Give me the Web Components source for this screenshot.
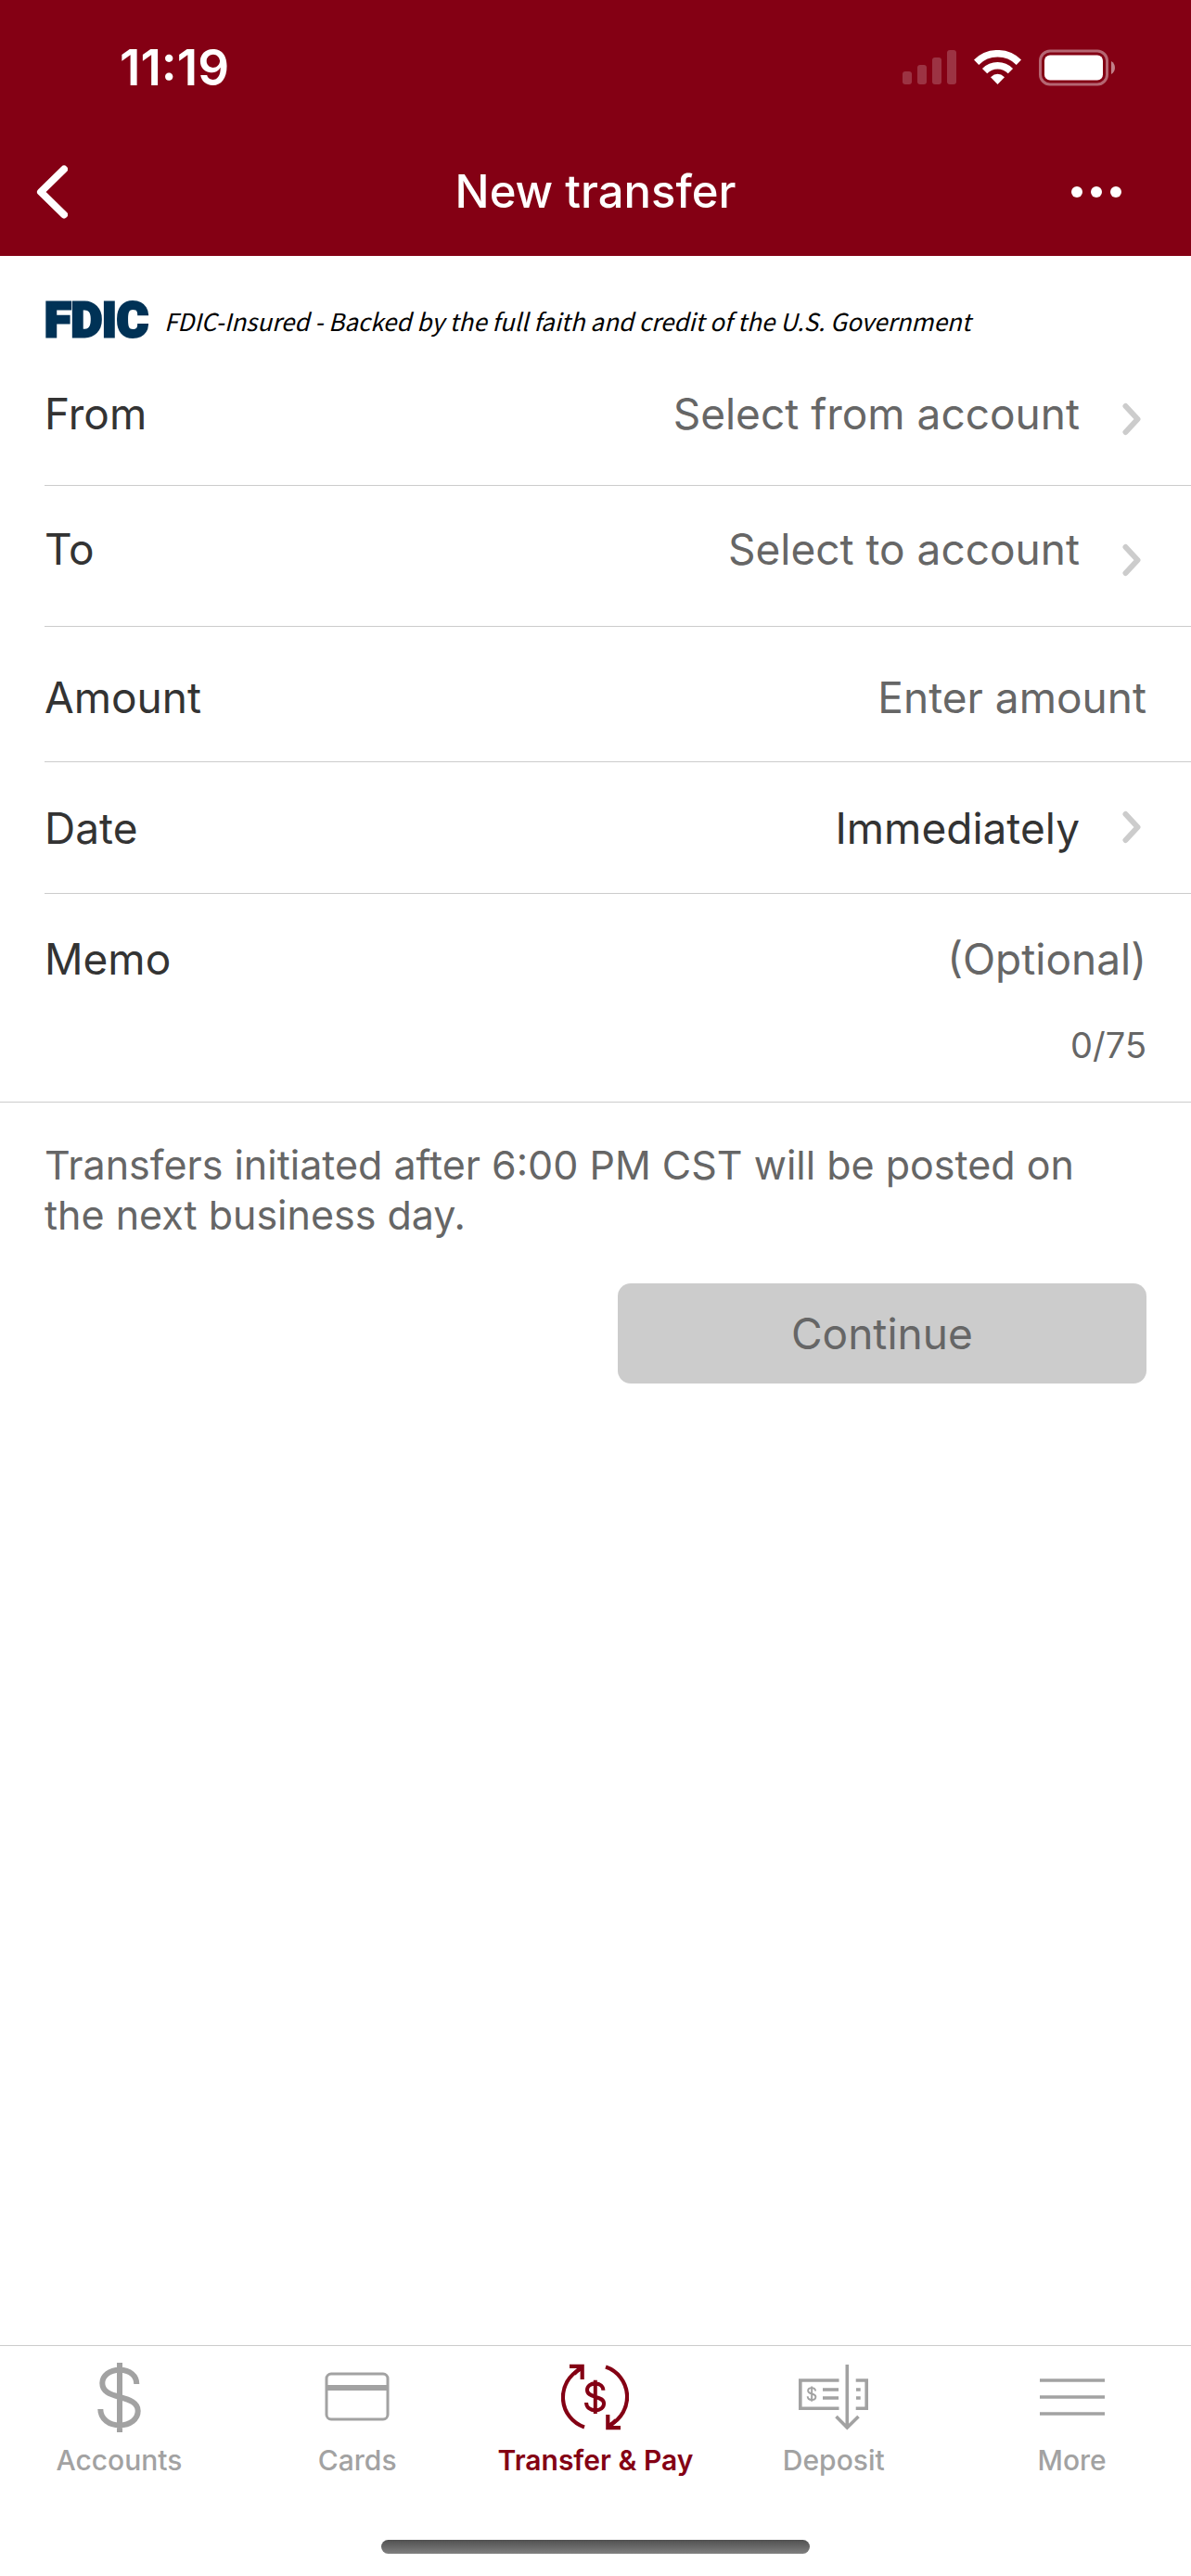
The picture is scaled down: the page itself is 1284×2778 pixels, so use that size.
<!DOCTYPE html>
<html lang="en">
<head>
<meta charset="utf-8">
<meta name="viewport" content="width=device-width">
<title>New transfer</title>
<style>
  body { margin: 0; background: #fff; color: #333; font-family: Inter, "Liberation Sans", sans-serif; }
</style>
</head>
<body>
<transfer-app></transfer-app>
<script>
const define = (name, html, setup) => customElements.define(name, class extends HTMLElement {
  constructor() {
    super();
    this.attachShadow({ mode: 'open' }).innerHTML = html;
  }
  connectedCallback() { if (setup) setup(this, this.shadowRoot); }
});

/* Clock, signal, wi-fi and battery */
define('status-bar', `
<style>
  :host { display: flex; align-items: center; justify-content: space-between; height: 146px; padding: 0 82px 0 129px; color: #fff; }
  time { font-size: 53px; font-weight: 600; line-height: 60px; }
  .icons { display: flex; align-items: center; gap: 19px; }
  svg { display: block; }
</style>
<time>11:19</time>
<div class="icons">
  <svg width="58" height="38" viewBox="0 0 58 38" fill="#fff" fill-opacity=".2" aria-label="No signal">
    <rect y="23" width="10" height="14" rx="3"/><rect x="16" y="16" width="10" height="21" rx="3"/>
    <rect x="32" y="8" width="10" height="29" rx="3"/><rect x="48" width="10" height="37" rx="3"/>
  </svg>
  <svg width="51" height="38" viewBox="0 0 51 38" fill="none" stroke="#fff" aria-label="Wi-Fi">
    <path d="M2.6 13.2A32.5 32.5 0 0 1 48.4 13.2" stroke-width="7.6"/>
    <path d="M11.6 22.6A19.5 19.5 0 0 1 39.4 22.6" stroke-width="7.4"/>
    <path d="M25.5 37L18 29.2Q25.5 22.4 33 29.2Z" fill="#fff" stroke="none"/>
  </svg>
  <svg width="82" height="40" viewBox="0 0 82 40" aria-label="Battery">
    <rect x="1.5" y="2" width="72" height="36" rx="10.5" fill="none" stroke="#fff" stroke-opacity=".4" stroke-width="3"/>
    <rect x="6" y="6.500" width="63" height="27" rx="6" fill="#fff"/>
    <path d="M78 13C83.300 15.500 83.300 24.500 78 27Z" fill="#fff" fill-opacity=".5"/>
  </svg>
</div>`);

define('nav-bar', `
<style>
  :host { display: grid; grid-template-columns: 150px 1fr 150px; align-items: center; height: 122px; padding-bottom: 8px; color: #fff; }
  h1 { margin: 0; text-align: center; font-size: 49px; font-weight: 500; line-height: 60px; }
  button { border: 0; padding: 0; background: none; color: inherit; height: 100px; display: flex; align-items: center; }
  .back { padding-left: 39px; }
  .menu { justify-content: flex-end; padding-right: 75px; }
</style>
<button class="back" aria-label="Back"><svg width="34" height="58" viewBox="0 0 34 58" fill="none" stroke="#fff" stroke-width="8" stroke-linecap="round" stroke-linejoin="round"><path d="M30 4.500L5 29L30 53.500"/></svg></button>
<h1><slot></slot></h1>
<button class="menu" aria-label="More options"><svg width="54" height="12" viewBox="0 0 54 12" fill="#fff"><circle cx="6" cy="6" r="6"/><circle cx="27" cy="6" r="6"/><circle cx="48" cy="6" r="6"/></svg></button>`);

define('fdic-banner', `
<style>
  :host { display: flex; align-items: center; gap: 17px; padding: 48px 48px 12px; line-height: 44px; }
  strong { font-family: Roboto, "Liberation Sans", sans-serif; font-size: 52px; font-weight: 900; color: #003256; -webkit-text-stroke: 3px #003256; }
  em { font-family: "Noto Sans CJK SC", sans-serif; font-size: 26px; color: #000; white-space: nowrap; }
</style>
<strong>FDIC</strong>
<em><slot></slot></em>`);

const rowStyle = `
  :host { display: block; padding-left: 48px; }
  .row { display: flex; align-items: flex-start; border-bottom: 1px solid #ccc; padding-top: var(--row-top, 43px); padding-bottom: var(--row-bottom, 42px); }
  label, .value, input { font-size: 46px; line-height: 56px; }
  label { flex: none; color: #333; }`;

/* Row which opens a picker */
define('picker-row', `
<style>${rowStyle}
  .row { padding-bottom: 0; }
  button { flex: 1; display: flex; justify-content: flex-end; align-items: flex-end; gap: 46px; border: 0; padding: 0 54px 0 0; background: none; font-family: inherit; text-align: right; }
  .value { color: var(--value-color, #666); padding-bottom: var(--row-bottom, 42px); }
  svg { display: block; flex: none; margin-bottom: 53px; }
</style>
<div class="row">
  <label for="field"></label>
  <button id="field" type="button"><span class="value"><slot></slot></span><svg width="20" height="36" viewBox="0 0 20 36" fill="none" stroke="#ccc" stroke-width="6" stroke-linecap="round" stroke-linejoin="round"><path d="M3.500 4L16.500 18L3.500 32"/></svg></button>
</div>`, (el, root) => { root.querySelector('label').textContent = el.getAttribute('label'); });

/* Row with a text box */
define('input-row', `
<style>${rowStyle}
  :host([wide]) { padding-left: 0; }
  :host([wide]) .row { padding-left: 48px; }
  .row { padding-right: 48px; }
  .entry { flex: 1; min-width: 0; display: flex; flex-direction: column; gap: 41px; }
  input { box-sizing: border-box; width: 100%; height: 56px; border: 0; padding: 0; outline: 0; background: none; font-family: inherit; color: #333; text-align: right; }
  input::placeholder { color: #666; opacity: 1; }
  ::slotted(*) { font-size: 38px; line-height: 48px; text-align: right; color: #666; }
</style>
<div class="row">
  <label for="field"></label>
  <div class="entry"><input id="field" type="text"><slot></slot></div>
</div>`, (el, root) => {
  root.querySelector('label').textContent = el.getAttribute('label');
  root.querySelector('input').placeholder = el.getAttribute('placeholder');
});

define('tab-item', `
<style>
  :host { display: block; flex: 1; min-width: 0; }
  a { display: flex; flex-direction: column; align-items: center; gap: 10px; color: #a2a2a2; text-decoration: none; font-size: 30px; font-weight: 500; line-height: 36px; white-space: nowrap; }
  :host([active]) a { color: #840014; font-weight: 600; }
  .icon { height: 80px; display: flex; align-items: center; justify-content: center; }
</style>
<a href="#"><span class="icon"><slot name="icon"></slot></span><span><slot></slot></span></a>`,
(el, root) => { if (el.hasAttribute('active')) root.querySelector('a').setAttribute('aria-current', 'page'); });

const dollar = 'M42.3 23C42.3 14 35 7.700 24 7.700S5.300 14 5.300 22C5.300 31 13 34 24 37S43.700 43 43.700 52 35 67.300 24 67.300 3.300 61 3.300 50M24 0V75';

define('tab-bar', `
<style>
  :host { display: block; border-top: 1px solid #ccc; padding: 15px 0 24px; }
  nav { display: flex; }
  svg { display: block; fill: none; stroke: currentColor; }
  .home { width: 36%; height: 15px; margin: 68px auto 0; border-radius: 8px; background: linear-gradient(#505050, #808080); }
</style>
<nav>
  <tab-item><svg slot="icon" width="47" height="75" viewBox="0 0 47 75" stroke-width="6"><path d="${dollar}"/></svg>Accounts</tab-item>
  <tab-item><svg slot="icon" width="70" height="54" viewBox="0 0 70 54" stroke-width="3"><rect x="2" y="2" width="66" height="49" rx="5"/><path d="M2 17H68" stroke-width="6"/></svg>Cards</tab-item>
  <tab-item active><svg slot="icon" width="73" height="72" viewBox="0 0 73 72" stroke-width="4.200">
    <path d="M25 68.500A34 34 0 0 1 20.500 6"/><path d="M9 2.800H22.700V17" /><path d="M22 3L14 11"/>
    <path d="M48 3.500A34 34 0 0 1 52.500 66"/><path d="M64 69.200H50.300V55"/><path d="M51 69L59 61"/>
    <path transform="translate(25.500 17.700) scale(.47 .485)" stroke-width="8.500" d="${dollar}"/></svg>Transfer &amp; Pay</tab-item>
  <tab-item><svg slot="icon" width="75" height="72" viewBox="0 0 75 72" stroke-width="3.600">
    <path d="M43.500 18H1.800V48.200H43.500M61.700 18H73.200V48.200H61.700M26 28H43M26 37H43M62 28H66.700M62 37H66.700"/>
    <path d="M52.300 1V70M40.500 57L52.300 69L64.500 57"/>
    <path transform="translate(9 24.500) scale(.215)" stroke-width="9" d="${dollar}"/></svg>Deposit</tab-item>
  <tab-item><svg slot="icon" width="70" height="40" viewBox="0 0 70 40" stroke-width="3.600"><path d="M0 2H70M0 20H70M0 38H70"/></svg>More</tab-item>
</nav>
<div class="home"></div>`);

define('transfer-app', `
<style>
  :host { display: flex; flex-direction: column; min-height: 100vh; }
  header { background: #840014; }
  form { display: block; }
  .from { --row-top: 38px; --row-bottom: 49px; }
  .to { --row-top: 40px; --row-bottom: 55px; }
  .amount { --row-top: 48px; --row-bottom: 41px; }
  .date { --value-color: #333; }
  .memo { --row-top: 42px; --row-bottom: 37px; }
  p { margin: 0; padding: 40px 96px 47px 48px; font-size: 43px; line-height: 54px; color: #666; }
  .actions { display: flex; justify-content: flex-end; padding: 0 48px; }
  .actions button { width: 48%; height: 108px; border: 0; border-radius: 14px; background: #ccc; color: #666; font-family: inherit; font-size: 46px; line-height: 56px; }
  tab-bar { margin-top: auto; }
</style>
<header>
  <status-bar></status-bar>
  <nav-bar>New transfer</nav-bar>
</header>
<main>
  <fdic-banner>FDIC-Insured - Backed by the full faith and credit of the U.S. Government</fdic-banner>
  <form>
    <picker-row class="from" label="From">Select from account</picker-row>
    <picker-row class="to" label="To">Select to account</picker-row>
    <input-row class="amount" label="Amount" placeholder="Enter amount"></input-row>
    <picker-row class="date" label="Date">Immediately</picker-row>
    <input-row class="memo" wide label="Memo" placeholder="(Optional)"><span>0/75</span></input-row>
    <p>Transfers initiated after 6:00 PM CST will be posted on the next business day.</p>
    <div class="actions"><button type="button" disabled>Continue</button></div>
  </form>
</main>
<tab-bar></tab-bar>`);
</script>
</body>
</html>
